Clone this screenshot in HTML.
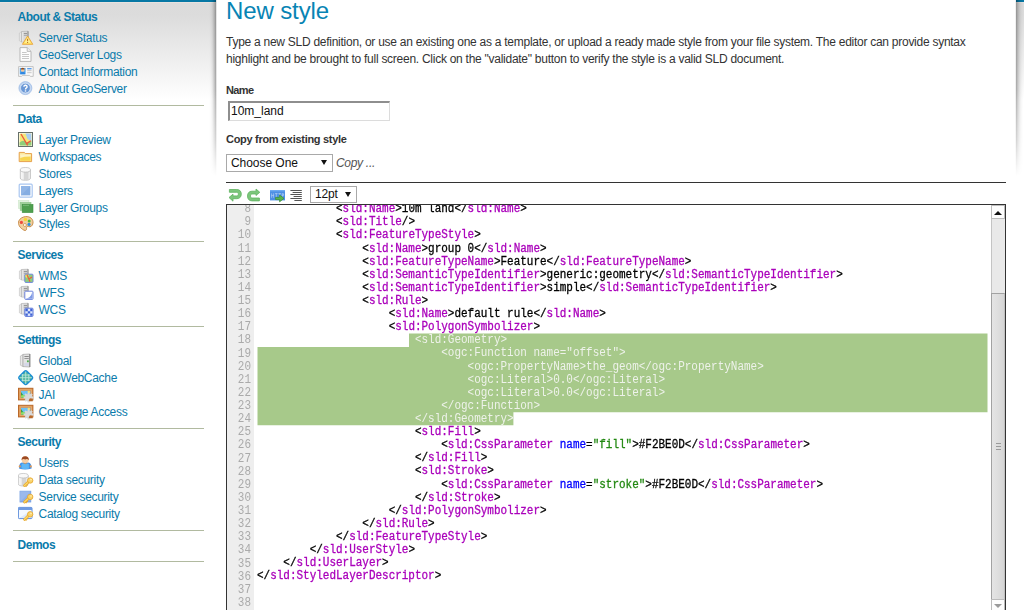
<!DOCTYPE html>
<html lang="en">
<head>
<meta charset="utf-8">
<title>GeoServer: New style</title>
<style>
html,body{margin:0;padding:0;}
body{width:1024px;height:610px;overflow:hidden;position:relative;background:#fff;font-family:"Liberation Sans",Arial,sans-serif;font-size:12px;color:#333;}
#bg{position:absolute;left:0;top:0;width:1024px;height:610px;background:linear-gradient(to bottom,#dadada 0px,#dcdcdc 16px,#ffffff 100px,#ffffff 610px);}
#topbar{position:absolute;left:0;top:0;width:1024px;height:2px;background:#0677a4;}
#topline{position:absolute;left:0;top:2px;width:1024px;height:1px;background:#e6e2df;}
#main{position:absolute;left:216px;top:0;width:800px;height:610px;background:#fff;}
.sh{position:absolute;top:0;height:180px;-webkit-mask-image:linear-gradient(to bottom,#000 0,#000 90px,rgba(0,0,0,.55) 140px,transparent 176px);mask-image:linear-gradient(to bottom,#000 0,#000 90px,rgba(0,0,0,.55) 140px,transparent 176px);}
#shl{left:207px;width:10px;background:linear-gradient(to left,rgba(0,0,0,.10) 0.5px,rgba(0,0,0,.30) 1.5px,rgba(0,0,0,.21) 2.5px,rgba(0,0,0,.14) 3.5px,rgba(0,0,0,.08) 4.5px,rgba(0,0,0,.04) 5.5px,rgba(0,0,0,.015) 6.5px,rgba(0,0,0,0) 8px);}
#shr{left:1015px;width:9px;background:linear-gradient(to right,rgba(0,0,0,.06) 0.5px,rgba(0,0,0,.30) 1.5px,rgba(0,0,0,.22) 2.5px,rgba(0,0,0,.155) 3.5px,rgba(0,0,0,.10) 4.5px,rgba(0,0,0,.06) 5.5px,rgba(0,0,0,.03) 6.5px,rgba(0,0,0,.01) 7.5px,rgba(0,0,0,0) 8.5px);}
/* sidebar */
#nav{position:absolute;left:0;top:0;width:216px;height:610px;}
#nav .h{position:absolute;left:17.6px;font-weight:bold;font-size:12px;letter-spacing:-0.5px;line-height:17px;color:#0a7bab;white-space:nowrap;}
#nav .i{position:absolute;left:38.6px;font-size:12px;letter-spacing:-0.31px;line-height:17px;color:#0a7bab;white-space:nowrap;}
#nav .d{position:absolute;left:13px;width:191px;height:1px;background:#b1baa0;}
#nav svg{position:absolute;left:18px;width:16px;height:16px;}
/* main */
h2{position:absolute;left:226px;top:-4px;margin:0;font-weight:normal;font-size:24px;letter-spacing:-0.12px;line-height:30px;color:#0884b4;white-space:nowrap;}
p.desc{position:absolute;left:226px;top:34px;margin:0;width:770px;font-size:12px;letter-spacing:-0.265px;line-height:17px;color:#333;}
.lbl{position:absolute;left:226px;font-weight:bold;font-size:11px;letter-spacing:-0.3px;line-height:14px;color:#333;white-space:nowrap;}
#name{position:absolute;left:228px;top:101px;width:162px;height:20px;box-sizing:border-box;border-style:solid;border-width:2px 1px 1px 2px;border-color:#8e8e8e #dcdcdc #dcdcdc #8e8e8e;background:#fff;font-size:12px;line-height:17px;padding:0 0 0 1px;color:#111;white-space:nowrap;}
.sel-box{position:absolute;box-sizing:border-box;border:1px solid #a9a9a9;background:#fff;font-size:12px;color:#111;white-space:nowrap;}
.arr{position:absolute;width:0;height:0;border-left:3.3px solid transparent;border-right:3.3px solid transparent;border-top:5.6px solid #111;}
#copy{position:absolute;left:336px;top:155px;font-style:italic;font-size:12px;letter-spacing:-0.3px;line-height:17px;color:#555;white-space:nowrap;}
#hr{position:absolute;left:226px;top:182px;width:780px;height:1px;background:#333;}
/* editor */
#ed{position:absolute;left:226px;top:204px;width:780px;height:420px;box-sizing:border-box;border:1px solid #333;border-left:1px solid #333;background:#fff;overflow:hidden;}
#gutter{position:absolute;left:0;top:0;width:27px;height:420px;background:#eeeeee;}
#nums{position:absolute;left:0;top:-1.8px;width:24px;text-align:right;font-family:"Liberation Mono",monospace;font-size:12px;line-height:13.12px;color:#aaa;transform:scaleX(.9139);transform-origin:100% 0;}
#code{-webkit-text-stroke:0.3px;position:absolute;left:29.8px;top:-1.8px;width:800px;font-family:"Liberation Mono",monospace;font-size:12px;line-height:13.12px;color:#000;transform:scaleX(.9139);transform-origin:0 0;}
#code .ln{height:13.12px;white-space:pre;}
.t{color:#a0b;}
.p{color:#000;}
.an{color:#00f;}
.av{color:#281;}
.sel{color:#eef2ea;-webkit-text-stroke:0;}
#sb{position:absolute;left:764px;top:0;width:14px;height:420px;background:#e9e9e9;border-left:1px solid #c4c4c4;box-sizing:border-box;}
#sb .up,#sb .dn{position:absolute;left:-1px;width:14px;box-sizing:border-box;background:#fdfdfd;border:1px solid #bcbcbc;}
#sb .up{top:0;height:14px;}
#sb .dn{top:394px;height:20px;}
#sb .th{position:absolute;left:-1px;top:88px;width:14px;height:307px;box-sizing:border-box;border:1px solid #a2a2a2;border-right-color:#c0c0c0;background:linear-gradient(to right,#e4e4e4 0,#dedede 50%,#d5d5d5 100%);}
#sb .g{position:absolute;left:4px;width:5px;height:1px;background:#9a9a9a;}
#sb .tri{position:absolute;left:2px;width:0;height:0;border-left:4px solid transparent;border-right:4px solid transparent;}
</style>
</head>
<body>
<div id="bg"></div>
<div id="topbar"></div>
<div id="topline"></div>
<div id="nav">
<div class="h" style="top:9.00px">About &amp; Status</div>
<svg style="top:30px" viewBox="0 0 16 16"><path d="M1.4 3 L3.6 1.6 L3.6 12 L1.4 10.8 Z" fill="#e6e6e6" stroke="#c2c2c2" stroke-width=".6"/><path d="M3.6 1.5 L10 1.2 L10 12.4 L3.6 12 Z" fill="#d8d8d8" stroke="#adadad" stroke-width=".6"/><path d="M4.8 2 L4.8 11.8" stroke="#ececec" stroke-width="1"/><path d="M10 1.2 L10 12.4" stroke="#868686" stroke-width=".9"/><rect x="5.8" y="3" width="3.4" height="1" fill="#979797"/><rect x="5.8" y="4.8" width="3.4" height="1" fill="#a5a5a5"/><path d="M9.6 6 L14.8 14.3 L4.4 14.3 Z" fill="#ffe566" stroke="#eaa23a" stroke-width=".9" stroke-linejoin="round"/><path d="M9.6 7.6 L12.6 12.8 L6.6 12.8 Z" fill="#fff6a8" opacity=".75"/><rect x="9.1" y="8.8" width="1" height="2.4" fill="#b86a24"/><rect x="9.1" y="12" width="1" height="1" fill="#b86a24"/></svg><div class="i" style="top:30.00px">Server Status</div>
<svg style="top:47px" viewBox="0 0 16 16"><path d="M2 .6 L9.2 .6 L13 4.4 L13 14.4 L2 14.4 Z" fill="#fdfdfd" stroke="#b0b0b0" stroke-width=".9"/><path d="M9.2 .6 L9.2 4.4 L13 4.4" fill="#eeeeee" stroke="#b0b0b0" stroke-width=".8"/><path d="M4 5.5 H8.6 M4 7.5 H11 M4 9.5 H11 M4 11.5 H11" stroke="#c8c8c8" stroke-width="1"/></svg><div class="i" style="top:47.00px">GeoServer Logs</div>
<svg style="top:64px" viewBox="0 0 16 16"><path d="M.6 2.6 H15.2 V12.4 H12.4 L11.6 11.4 H4.4 L3.6 12.4 H.6 Z" fill="#fafafa" stroke="#bdbdbd" stroke-width=".9"/><rect x="1.8" y="4" width="5.8" height="6.2" fill="#52a6ee"/><circle cx="4.7" cy="6" r="1.9" fill="#f3c79d"/><path d="M2.8 5.6 A1.9 1.9 0 0 1 6.6 5.6 Z" fill="#8a4a22"/><path d="M2.2 10.2 A2.5 2.4 0 0 1 7.2 10.2 Z" fill="#2f86e0"/><rect x="9.2" y="4" width="4.4" height="1.4" fill="#5f9fe8"/><rect x="9.2" y="6.2" width="4.4" height="1" fill="#c6c6c6"/><rect x="9.2" y="8.2" width="4.4" height="1" fill="#c6c6c6"/></svg><div class="i" style="top:64.00px">Contact Information</div>
<svg style="top:81px" viewBox="0 0 16 16"><circle cx="7.4" cy="7.1" r="6.5" fill="#bcd2ef" stroke="#9ab8e4" stroke-width=".7"/><circle cx="7.4" cy="7.1" r="4.9" fill="#6b98d6"/><circle cx="7.4" cy="7.1" r="4.9" fill="none" stroke="#dfeaf8" stroke-width=".7"/><path d="M5.9 5.8 A1.6 1.5 0 1 1 8.2 7.1 Q7.5 7.6 7.5 8.4" fill="none" stroke="#fff" stroke-width="1.4"/><rect x="6.8" y="9.3" width="1.4" height="1.3" fill="#fff"/></svg><div class="i" style="top:81.00px">About GeoServer</div>
<div class="d" style="top:105px"></div>
<div class="h" style="top:111.00px">Data</div>
<svg style="top:132px" viewBox="0 0 16 16"><rect x=".5" y="2.5" width="14" height="14" fill="#fff" stroke="#66706a" stroke-width="1" transform="translate(0,-2)"/><rect x="1.6" y="1.6" width="11.8" height="11.8" fill="#f4e77a"/><path d="M7.5 1.6 H13.4 V9 L9.5 7 Z" fill="#a9cdf0"/><path d="M1.6 10.5 Q5 7.5 8 10 Q11 11 13.4 8.6 V13.4 H1.6 Z" fill="#8fce7a"/><path d="M3 2 L9.6 13.4 M8.6 11.6 L12.8 8.8" stroke="#ee5a3c" stroke-width="1.3" fill="none"/></svg><div class="i" style="top:132.00px">Layer Preview</div>
<svg style="top:149px" viewBox="0 0 16 16"><path d="M1.2 3.4 H6.4 L7.4 4.6 H13.6 V12.6 H1.2 Z" fill="#fbe9a0" stroke="#e6a04a" stroke-width="1" stroke-linejoin="round"/><path d="M2.2 7.2 H12.6 V11.8 H2.2 Z" fill="#f7d54e"/><path d="M2.2 5.6 H12.6 V7.6 Q7 7.4 2.2 9 Z" fill="#fdf3c4"/></svg><div class="i" style="top:149.00px">Workspaces</div>
<svg style="top:166px" viewBox="0 0 16 16"><g transform="translate(0,0.2)"><path d="M2.3 3.6 L2.3 11.8 A5.1 2.3 0 0 0 12.5 11.8 L12.5 3.6 Z" fill="#ececec" stroke="#b8b8b8" stroke-width=".7"/><path d="M6 5.4 L6 13.8 L10.4 13.6 L10.4 5.2 Z" fill="#cdcdcd" opacity=".75"/><path d="M3.2 5 L3.2 12.6 L4.6 13.2 L4.6 5.4 Z" fill="#fafafa" opacity=".9"/><ellipse cx="7.4" cy="3.6" rx="5.1" ry="2.3" fill="#f9f9f9" stroke="#b8b8b8" stroke-width=".7"/></g></svg><div class="i" style="top:166.00px">Stores</div>
<svg style="top:183px" viewBox="0 0 16 16"><rect x="1.2" y="1.2" width="13" height="13" rx="1" fill="#fff" stroke="#a9c6f0" stroke-width="1.2"/><rect x="3" y="3" width="9.4" height="9.4" fill="#85ade2"/><path d="M3 3 H12.4 L3 12.4 Z" fill="#9bbcea" opacity=".6"/></svg><div class="i" style="top:183.00px">Layers</div>
<svg style="top:200px" viewBox="0 0 16 16"><rect x=".3" y=".4" width="10.6" height="8" fill="#e3f2e0" stroke="#cfe8cc" stroke-width=".6"/><rect x="2.2" y="2.4" width="10.8" height="8" fill="#9fd09a" stroke="#8cc488" stroke-width=".6"/><rect x="4.2" y="4.4" width="10.8" height="8.2" fill="#4f9f4f" stroke="#3f8f42" stroke-width=".6"/><path d="M5 5.4 H11" stroke="#7fc07f" stroke-width=".8"/></svg><div class="i" style="top:200.00px">Layer Groups</div>
<svg style="top:216px" viewBox="0 0 16 16"><path d="M7.6 .6 C12 .2 15.4 3 15 7 C14.6 10 12.4 11.4 10.6 10.6 C9 10 8.4 11 8.6 12.4 C8.8 14 7.6 15 6 14.2 C1.6 12 -.4 8 .8 5 C1.8 2.6 4.4 .9 7.6 .6 Z" fill="#f1cf9d" stroke="#c98f4e" stroke-width="1"/><circle cx="3.4" cy="6.4" r="1.6" fill="#ee4b3e"/><circle cx="7.4" cy="3.4" r="1.7" fill="#f7d631"/><circle cx="11.2" cy="5" r="1.5" fill="#4fb53b"/><circle cx="11" cy="8.4" r="1.6" fill="#2f8fe0"/><circle cx="6.9" cy="9" r="1.5" fill="#fff" stroke="#c98f4e" stroke-width=".8"/></svg><div class="i" style="top:216.00px">Styles</div>
<div class="d" style="top:241px"></div>
<div class="h" style="top:247.00px">Services</div>
<svg style="top:268px" viewBox="0 0 16 16"><path d="M1.4 3 L3.6 1.6 L3.6 12 L1.4 10.8 Z" fill="#e6e6e6" stroke="#c2c2c2" stroke-width=".6"/><path d="M3.6 1.5 L10 1.2 L10 12.4 L3.6 12 Z" fill="#d8d8d8" stroke="#adadad" stroke-width=".6"/><path d="M4.8 2 L4.8 11.8" stroke="#ececec" stroke-width="1"/><path d="M10 1.2 L10 12.4" stroke="#868686" stroke-width=".9"/><rect x="5.8" y="3" width="3.4" height="1" fill="#979797"/><rect x="5.8" y="4.8" width="3.4" height="1" fill="#a5a5a5"/><rect x="6.8" y="6.2" width="8.2" height="8.2" rx=".8" fill="#8fce7a" stroke="#7086de" stroke-width="1"/><path d="M7.4 6.8 H11 L9 10 L7.4 9 Z" fill="#f4e060"/><path d="M9 6.8 L12 13.8 M11 11 L14 9" stroke="#ee5a3c" stroke-width="1.1"/></svg><div class="i" style="top:268.00px">WMS</div>
<svg style="top:285px" viewBox="0 0 16 16"><path d="M1.4 3 L3.6 1.6 L3.6 12 L1.4 10.8 Z" fill="#e6e6e6" stroke="#c2c2c2" stroke-width=".6"/><path d="M3.6 1.5 L10 1.2 L10 12.4 L3.6 12 Z" fill="#d8d8d8" stroke="#adadad" stroke-width=".6"/><path d="M4.8 2 L4.8 11.8" stroke="#ececec" stroke-width="1"/><path d="M10 1.2 L10 12.4" stroke="#868686" stroke-width=".9"/><rect x="5.8" y="3" width="3.4" height="1" fill="#979797"/><rect x="5.8" y="4.8" width="3.4" height="1" fill="#a5a5a5"/><rect x="6.8" y="6.2" width="8.2" height="8.2" rx=".8" fill="#fff" stroke="#6f84dc" stroke-width="1"/><path d="M14.4 6.8 V13.8 H7.4 Q13 13 14.4 6.8 Z" fill="#7e9ae6"/></svg><div class="i" style="top:285.00px">WFS</div>
<svg style="top:302px" viewBox="0 0 16 16"><path d="M1.4 3 L3.6 1.6 L3.6 12 L1.4 10.8 Z" fill="#e6e6e6" stroke="#c2c2c2" stroke-width=".6"/><path d="M3.6 1.5 L10 1.2 L10 12.4 L3.6 12 Z" fill="#d8d8d8" stroke="#adadad" stroke-width=".6"/><path d="M4.8 2 L4.8 11.8" stroke="#ececec" stroke-width="1"/><path d="M10 1.2 L10 12.4" stroke="#868686" stroke-width=".9"/><rect x="5.8" y="3" width="3.4" height="1" fill="#979797"/><rect x="5.8" y="4.8" width="3.4" height="1" fill="#a5a5a5"/><rect x="6.8" y="6.2" width="8.2" height="8.2" rx=".8" fill="#dfe8fb" stroke="#5f78d8" stroke-width="1"/><path d="M7.4 6.8h2.4v2.4h-2.4z M12.2 6.8h2.2v2.4h-2.2z M9.8 9.2h2.4v2.4h-2.4z M7.4 11.6h2.4v2.2h-2.4z M12.2 11.6h2.2v2.2h-2.2z" fill="#3f63d6"/></svg><div class="i" style="top:302.00px">WCS</div>
<div class="d" style="top:326px"></div>
<div class="h" style="top:332.00px">Settings</div>
<svg style="top:353px" viewBox="0 0 16 16"><g transform="translate(0.4,0) scale(1.0)"><path d="M2 3 L4.6 1.6 L4.6 13.6 L2 12.2 Z" fill="#e9e9e9" stroke="#b9b9b9" stroke-width=".7"/><path d="M4.6 1.4 L11.4 1 L11.4 14 L4.6 13.6 Z" fill="#e3e3e3" stroke="#a4a4a4" stroke-width=".7"/><path d="M11.4 1 L11.4 14" stroke="#7d7d7d" stroke-width="1"/><rect x="6" y="3" width="4.4" height="1" fill="#8a8a8a"/><rect x="6" y="5" width="4.4" height="1" fill="#9a9a9a"/><rect x="6" y="10" width="4.6" height="3" fill="#cfd3ea" opacity=".8"/><rect x="8.6" y="7.4" width="1.8" height="1.8" fill="#4fae4f"/></g></svg><div class="i" style="top:353.00px">Global</div>
<svg style="top:370px" viewBox="0 0 16 16"><rect x="2.4" y="2.4" width="10.6" height="10.6" rx="2" transform="rotate(45 7.7 7.7)" fill="#53b7a0" stroke="#1d8fd2" stroke-width="1.6"/><path d="M7.7 1.4 V14 M4.6 4 V11.4 M10.8 4 V11.4 M1.4 7.7 H14 M3.6 5 H11.8 M3.6 10.4 H11.8" stroke="#d8f2ea" stroke-width=".8" opacity=".85"/></svg><div class="i" style="top:370.00px">GeoWebCache</div>
<svg style="top:387px" viewBox="0 0 16 16"><rect x=".5" y="1.3" width="14.4" height="11.6" fill="#d9904e" stroke="#b9692a" stroke-width="1"/><rect x="2" y="2.8" width="11.4" height="8.6" fill="none" stroke="#e9b074" stroke-width=".8"/><rect x="3" y="3.8" width="9.4" height="6.6" fill="#6fc2f4"/><path d="M3 5 L7 10.4 H3 Z" fill="#3f9f3f"/><path d="M3 8.4 Q7 7 10 10.4 H3 Z" fill="#8fde6a"/><circle cx="10.8" cy="5" r="1.2" fill="#f7e36a"/><g transform="translate(10.6,10.6)"><circle r="3.6" fill="#d9d9d9" stroke="#c4c4c4" stroke-width=".5"/><path d="M-1-5h2v10h-2z M-5-1h10v2h-10z" fill="#d9d9d9"/><path d="M-1-5h2v10h-2z M-5-1h10v2h-10z" fill="#d9d9d9" transform="rotate(45)"/><circle cx="2.2" cy="2.6" r="1.9" fill="#b9692a"/><path d="M.4 3.6 A1.9 1.3 0 0 0 4 3.6 Z" fill="#f4f4f4"/></g></svg><div class="i" style="top:387.00px">JAI</div>
<svg style="top:404px" viewBox="0 0 16 16"><rect x=".5" y="1.3" width="14.4" height="11.6" fill="#d9904e" stroke="#b9692a" stroke-width="1"/><rect x="2" y="2.8" width="11.4" height="8.6" fill="none" stroke="#e9b074" stroke-width=".8"/><rect x="3" y="3.8" width="9.4" height="6.6" fill="#6fc2f4"/><path d="M3 5 L7 10.4 H3 Z" fill="#3f9f3f"/><path d="M3 8.4 Q7 7 10 10.4 H3 Z" fill="#8fde6a"/><circle cx="10.8" cy="5" r="1.2" fill="#f7e36a"/><g transform="translate(10.6,10.6)"><circle r="3.6" fill="#d9d9d9" stroke="#c4c4c4" stroke-width=".5"/><path d="M-1-5h2v10h-2z M-5-1h10v2h-10z" fill="#d9d9d9"/><path d="M-1-5h2v10h-2z M-5-1h10v2h-10z" fill="#d9d9d9" transform="rotate(45)"/><circle cx="2.2" cy="2.6" r="1.9" fill="#b9692a"/><path d="M.4 3.6 A1.9 1.3 0 0 0 4 3.6 Z" fill="#f4f4f4"/></g></svg><div class="i" style="top:404.00px">Coverage Access</div>
<div class="d" style="top:428px"></div>
<div class="h" style="top:434.00px">Security</div>
<svg style="top:455px" viewBox="0 0 16 16"><path d="M1 13.4 Q1 8 4 7.6 H10.4 Q13.6 8 13.6 13.4 Q7 15.6 1 13.4 Z" fill="#3f8fe8"/><path d="M3.6 8.8 Q7.2 7.6 10.8 8.8 L11 13.4 Q7.2 14.6 3.4 13.4 Z" fill="#5fb7f6"/><circle cx="1.8" cy="11.4" r="1.1" fill="#e59a52"/><circle cx="12.8" cy="11.4" r="1.1" fill="#e59a52"/><circle cx="7.2" cy="4.8" r="3.5" fill="#f6cfa6"/><path d="M3.5 5.2 A3.7 3.9 0 0 1 10.9 5.2 Q9 3.4 7.2 4.6 Q5.4 3.4 3.5 5.2 Z" fill="#9d4a22"/><path d="M5.4 8 Q7.2 9.4 9 8" stroke="#d08a4a" stroke-width=".7" fill="none"/></svg><div class="i" style="top:455.00px">Users</div>
<svg style="top:472px" viewBox="0 0 16 16"><g transform="translate(-.4,0) scale(.98)"><g transform="translate(-1.6,0.2)"><path d="M2.3 3.6 L2.3 11.8 A5.1 2.3 0 0 0 12.5 11.8 L12.5 3.6 Z" fill="#ececec" stroke="#b8b8b8" stroke-width=".7"/><path d="M6 5.4 L6 13.8 L10.4 13.6 L10.4 5.2 Z" fill="#cdcdcd" opacity=".75"/><path d="M3.2 5 L3.2 12.6 L4.6 13.2 L4.6 5.4 Z" fill="#fafafa" opacity=".9"/><ellipse cx="7.4" cy="3.6" rx="5.1" ry="2.3" fill="#f9f9f9" stroke="#b8b8b8" stroke-width=".7"/></g></g><g transform="translate(0,0)"><path d="M6.6 13.6 L10.6 9.8" stroke="#e6a52a" stroke-width="2.8" stroke-linecap="round"/><path d="M6.6 13.6 L10.6 9.8" stroke="#fbd765" stroke-width="1.5" stroke-linecap="round"/><path d="M7.6 13.6 l1 1 M8.8 12.4 l1 1" stroke="#e6a52a" stroke-width="1.2"/><circle cx="12.2" cy="8.5" r="2.7" fill="#f9d36b" stroke="#e6a52a" stroke-width=".8"/><circle cx="13" cy="7.6" r=".8" fill="#fff0bd"/></g></svg><div class="i" style="top:472.00px">Data security</div>
<svg style="top:489px" viewBox="0 0 16 16"><rect x="2" y="2.2" width="10.8" height="10.8" fill="#8fb0e8" stroke="#6f9ce2" stroke-width=".8"/><path d="M2 2.2 H12.8 L2 13 Z" fill="#a3c0ee" opacity=".6"/><g transform="translate(0,-0.6)"><path d="M6.6 13.6 L10.6 9.8" stroke="#e6a52a" stroke-width="2.8" stroke-linecap="round"/><path d="M6.6 13.6 L10.6 9.8" stroke="#fbd765" stroke-width="1.5" stroke-linecap="round"/><path d="M7.6 13.6 l1 1 M8.8 12.4 l1 1" stroke="#e6a52a" stroke-width="1.2"/><circle cx="12.2" cy="8.5" r="2.7" fill="#f9d36b" stroke="#e6a52a" stroke-width=".8"/><circle cx="13" cy="7.6" r=".8" fill="#fff0bd"/></g></svg><div class="i" style="top:489.00px">Service security</div>
<svg style="top:506px" viewBox="0 0 16 16"><rect x=".4" y="1.4" width="13.6" height="11.2" rx=".8" fill="#f4f9ff" stroke="#5f8fdc" stroke-width="1"/><rect x=".4" y="1.4" width="13.6" height="2.6" fill="#6f9be2"/><path d="M1.2 12 L13.4 4.4 V12 Z" fill="#d7e6fb" opacity=".8"/><g transform="translate(0,-0.2)"><path d="M6.6 13.6 L10.6 9.8" stroke="#e6a52a" stroke-width="2.8" stroke-linecap="round"/><path d="M6.6 13.6 L10.6 9.8" stroke="#fbd765" stroke-width="1.5" stroke-linecap="round"/><path d="M7.6 13.6 l1 1 M8.8 12.4 l1 1" stroke="#e6a52a" stroke-width="1.2"/><circle cx="12.2" cy="8.5" r="2.7" fill="#f9d36b" stroke="#e6a52a" stroke-width=".8"/><circle cx="13" cy="7.6" r=".8" fill="#fff0bd"/></g></svg><div class="i" style="top:506.00px">Catalog security</div>
<div class="d" style="top:530px"></div>
<div class="h" style="top:537.00px">Demos</div>
<div class="d" style="top:561px"></div>
</div>
<div id="main"></div>
<div class="sh" id="shl"></div>
<div class="sh" id="shr"></div>
<h2>New style</h2>
<p class="desc">Type a new SLD definition, or use an existing one as a template, or upload a ready made style from your file system. The editor can provide syntax highlight and be brought to full screen. Click on the "validate" button to verify the style is a valid SLD document.</p>
<div class="lbl" style="top:83.4px;letter-spacing:-0.6px">Name</div>
<div id="name">10m_land</div>
<div class="lbl" style="top:132px">Copy from existing style</div>
<div class="sel-box" style="left:226px;top:154px;width:107px;height:18px;line-height:16px;padding-left:4px;letter-spacing:-0.05px">Choose One<span class="arr" style="left:94px;top:5px"></span></div>
<div id="copy">Copy ...</div>
<div id="hr"></div>
<div id="tb">
<svg style="position:absolute;left:228px;top:188px;width:16px;height:16px" viewBox="0 0 16 16"><path d="M1.4 1.5 H8.8 C11.8 1.5 13.3 3.5 13.3 6.1 C13.3 8.7 11.8 10.7 8.8 10.7 H5 V13.2 L1 9.5 L5 6.2 V7.9 H8.8 C9.8 7.9 10.3 7.2 10.3 6.1 C10.3 5 9.8 4.3 8.8 4.3 H1.4 Z" fill="#7cc67c" stroke="#5fb25f" stroke-width=".8" stroke-linejoin="round"/></svg>
<svg style="position:absolute;left:246px;top:188px;width:16px;height:16px" viewBox="0 0 16 16"><path d="M13.4 12.9 H6 C3 12.9 1.5 10.9 1.5 8 C1.5 5.2 3 3.2 6 3.2 H10 V1 L13.8 4.3 L10 7.5 V6 H6 C5 6 4.5 6.8 4.5 8 C4.5 9.2 5 10 6 10 H13.4 Z" fill="#7cc67c" stroke="#5fb25f" stroke-width=".8" stroke-linejoin="round"/></svg>
<svg style="position:absolute;left:269px;top:188px;width:17px;height:16px" viewBox="0 0 17 16"><rect x="1" y="2" width="15" height="10.4" fill="#4d8fe4"/><rect x="1" y="2" width="15" height="1.4" fill="#6faaf0"/><path d="M2.6 5.4v4.4 M4.6 5.4v4.4 M2.6 7.6h2 M6 5.6h2.6 M7.3 5.6v4.2 M9.4 5.6h2.6 M10.7 5.6v4.2 M13.2 5.4v4.4 M13.2 5.8h1.4v1.6h-1.4" stroke="#e9f1fc" stroke-width="1" fill="none" opacity=".45"/><path d="M6.6 9.4 H10.6 V7 L15 10.4 L10.6 13.8 V11.6 H6.6 Z" fill="#5ab44e" stroke="#3d8f38" stroke-width=".8" stroke-linejoin="round"/></svg>
<svg style="position:absolute;left:288px;top:188px;width:16px;height:16px" viewBox="0 0 16 16"><path d="M2.4 2.5 H13.8 M4.6 4.5 H13.8 M2.4 6.5 H13.8 M5.6 8.5 H13.8 M2.4 10.5 H13.8 M6.4 12.5 H13.8" stroke="#555" stroke-width="1"/></svg>

</div>
<div class="sel-box" style="left:310px;top:186px;width:47px;height:17px;line-height:15px;padding-left:4px;letter-spacing:-0.2px">12pt<span class="arr" style="left:34px;top:5px"></span></div>
<div id="ed">
<div id="gutter"></div>
<svg id="selbg" style="position:absolute;left:0;top:0;width:764px;height:405px" viewBox="0 0 764 405"><path d="M182 128.4 H760.5 V207.2 H286.4 V220.3 H30.5 V141.9 H182 Z" fill="#a7c98a"/></svg>
<div id="nums">
<div>8</div>
<div>9</div>
<div>10</div>
<div>11</div>
<div>12</div>
<div>13</div>
<div>14</div>
<div>15</div>
<div>16</div>
<div>17</div>
<div>18</div>
<div>19</div>
<div>20</div>
<div>21</div>
<div>22</div>
<div>23</div>
<div>24</div>
<div>25</div>
<div>26</div>
<div>27</div>
<div>28</div>
<div>29</div>
<div>30</div>
<div>31</div>
<div>32</div>
<div>33</div>
<div>34</div>
<div>35</div>
<div>36</div>
<div>37</div>
<div>38</div>
</div>
<div id="code">
<div class="ln">            <span class="p">&lt;</span><span class="t">sld:Name</span><span class="p">&gt;</span>10m land<span class="p">&lt;/</span><span class="t">sld:Name</span><span class="p">&gt;</span></div>
<div class="ln">            <span class="p">&lt;</span><span class="t">sld:Title</span><span class="p">/&gt;</span></div>
<div class="ln">            <span class="p">&lt;</span><span class="t">sld:FeatureTypeStyle</span><span class="p">&gt;</span></div>
<div class="ln">                <span class="p">&lt;</span><span class="t">sld:Name</span><span class="p">&gt;</span>group 0<span class="p">&lt;/</span><span class="t">sld:Name</span><span class="p">&gt;</span></div>
<div class="ln">                <span class="p">&lt;</span><span class="t">sld:FeatureTypeName</span><span class="p">&gt;</span>Feature<span class="p">&lt;/</span><span class="t">sld:FeatureTypeName</span><span class="p">&gt;</span></div>
<div class="ln">                <span class="p">&lt;</span><span class="t">sld:SemanticTypeIdentifier</span><span class="p">&gt;</span>generic:geometry<span class="p">&lt;/</span><span class="t">sld:SemanticTypeIdentifier</span><span class="p">&gt;</span></div>
<div class="ln">                <span class="p">&lt;</span><span class="t">sld:SemanticTypeIdentifier</span><span class="p">&gt;</span>simple<span class="p">&lt;/</span><span class="t">sld:SemanticTypeIdentifier</span><span class="p">&gt;</span></div>
<div class="ln">                <span class="p">&lt;</span><span class="t">sld:Rule</span><span class="p">&gt;</span></div>
<div class="ln">                    <span class="p">&lt;</span><span class="t">sld:Name</span><span class="p">&gt;</span>default rule<span class="p">&lt;/</span><span class="t">sld:Name</span><span class="p">&gt;</span></div>
<div class="ln">                    <span class="p">&lt;</span><span class="t">sld:PolygonSymbolizer</span><span class="p">&gt;</span></div>
<div class="ln">                       <span class="sel"> &lt;sld:Geometry&gt;</span></div>
<div class="ln"><span class="sel">                            &lt;ogc:Function name=&quot;offset&quot;&gt;</span></div>
<div class="ln"><span class="sel">                                &lt;ogc:PropertyName&gt;the_geom&lt;/ogc:PropertyName&gt;</span></div>
<div class="ln"><span class="sel">                                &lt;ogc:Literal&gt;0.0&lt;/ogc:Literal&gt;</span></div>
<div class="ln"><span class="sel">                                &lt;ogc:Literal&gt;0.0&lt;/ogc:Literal&gt;</span></div>
<div class="ln"><span class="sel">                            &lt;/ogc:Function&gt;</span></div>
<div class="ln"><span class="sel">                        &lt;/sld:Geometry&gt;</span></div>
<div class="ln">                        <span class="p">&lt;</span><span class="t">sld:Fill</span><span class="p">&gt;</span></div>
<div class="ln">                            <span class="p">&lt;</span><span class="t">sld:CssParameter</span> <span class="an">name</span><span class="p">=</span><span class="av">"fill"</span><span class="p">&gt;</span>#F2BE0D<span class="p">&lt;/</span><span class="t">sld:CssParameter</span><span class="p">&gt;</span></div>
<div class="ln">                        <span class="p">&lt;/</span><span class="t">sld:Fill</span><span class="p">&gt;</span></div>
<div class="ln">                        <span class="p">&lt;</span><span class="t">sld:Stroke</span><span class="p">&gt;</span></div>
<div class="ln">                            <span class="p">&lt;</span><span class="t">sld:CssParameter</span> <span class="an">name</span><span class="p">=</span><span class="av">"stroke"</span><span class="p">&gt;</span>#F2BE0D<span class="p">&lt;/</span><span class="t">sld:CssParameter</span><span class="p">&gt;</span></div>
<div class="ln">                        <span class="p">&lt;/</span><span class="t">sld:Stroke</span><span class="p">&gt;</span></div>
<div class="ln">                    <span class="p">&lt;/</span><span class="t">sld:PolygonSymbolizer</span><span class="p">&gt;</span></div>
<div class="ln">                <span class="p">&lt;/</span><span class="t">sld:Rule</span><span class="p">&gt;</span></div>
<div class="ln">            <span class="p">&lt;/</span><span class="t">sld:FeatureTypeStyle</span><span class="p">&gt;</span></div>
<div class="ln">        <span class="p">&lt;/</span><span class="t">sld:UserStyle</span><span class="p">&gt;</span></div>
<div class="ln">    <span class="p">&lt;/</span><span class="t">sld:UserLayer</span><span class="p">&gt;</span></div>
<div class="ln"><span class="p">&lt;/</span><span class="t">sld:StyledLayerDescriptor</span><span class="p">&gt;</span></div>
<div class="ln"></div>
<div class="ln"></div>
</div>
<div id="sb"><div class="th"><div class="g" style="top:149px"></div><div class="g" style="top:152px"></div><div class="g" style="top:155px"></div></div><div class="up"><div class="tri" style="top:4.6px;border-bottom:4.6px solid #111"></div></div><div class="dn"><div class="tri" style="top:4.4px;border-top:4.2px solid #9a9a9a"></div></div></div>
</div>
</body>
</html>
